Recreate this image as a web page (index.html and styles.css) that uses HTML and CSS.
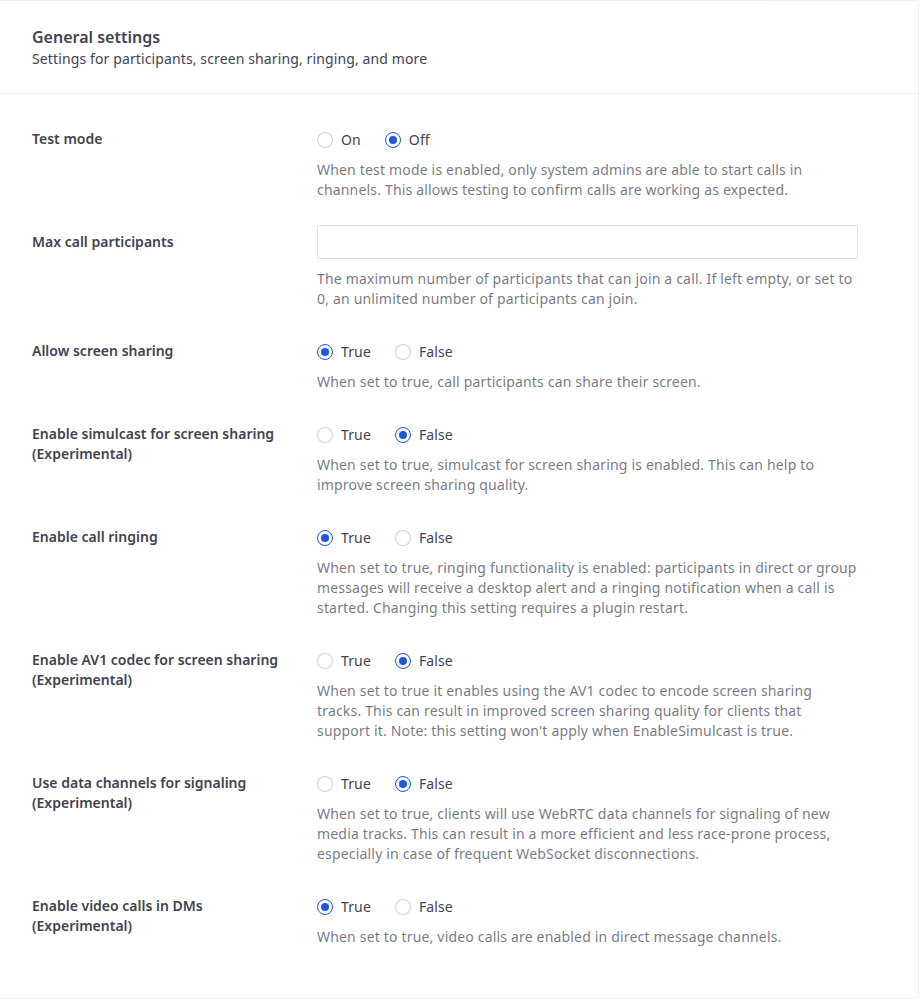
FILE: index.html
```html
<!DOCTYPE html>
<html>
<head>
<meta charset="utf-8">
<link rel="stylesheet" href="styles.css">
</head>
<body>
<div class="card">
  <div class="card-header">
    <div class="title">General settings</div>
    <div class="subtitle">Settings for participants, screen sharing, ringing, and more</div>
  </div>
  <div class="card-body">
    <div class="row">
      <div class="label">Test mode</div>
      <div class="control">
        <div class="radios">
          <span class="opt"><span class="radio"></span>On</span>
          <span class="opt"><span class="radio on"></span>Off</span>
        </div>
        <div class="help">When test mode is enabled, only system admins are able to start calls in channels. This allows testing to confirm calls are working as expected.</div>
      </div>
    </div>
    <div class="row">
      <div class="label">Max call participants</div>
      <div class="control">
        <input class="input" type="text">
        <div class="help">The maximum number of participants that can join a call. If left empty, or set to 0, an unlimited number of participants can join.</div>
      </div>
    </div>
    <div class="row">
      <div class="label">Allow screen sharing</div>
      <div class="control">
        <div class="radios">
          <span class="opt"><span class="radio on"></span>True</span>
          <span class="opt"><span class="radio"></span>False</span>
        </div>
        <div class="help">When set to true, call participants can share their screen.</div>
      </div>
    </div>
    <div class="row">
      <div class="label">Enable simulcast for screen sharing (Experimental)</div>
      <div class="control">
        <div class="radios">
          <span class="opt"><span class="radio"></span>True</span>
          <span class="opt"><span class="radio on"></span>False</span>
        </div>
        <div class="help">When set to true, simulcast for screen sharing is enabled. This can help to improve screen sharing quality.</div>
      </div>
    </div>
    <div class="row">
      <div class="label">Enable call ringing</div>
      <div class="control">
        <div class="radios">
          <span class="opt"><span class="radio on"></span>True</span>
          <span class="opt"><span class="radio"></span>False</span>
        </div>
        <div class="help">When set to true, ringing functionality is enabled: participants in direct or group messages will receive a desktop alert and a ringing notification when a call is started. Changing this setting requires a plugin restart.</div>
      </div>
    </div>
    <div class="row">
      <div class="label">Enable AV1 codec for screen sharing (Experimental)</div>
      <div class="control">
        <div class="radios">
          <span class="opt"><span class="radio"></span>True</span>
          <span class="opt"><span class="radio on"></span>False</span>
        </div>
        <div class="help">When set to true it enables using the AV1 codec to encode screen sharing tracks. This can result in improved screen sharing quality for clients that support it. Note: this setting won't apply when EnableSimulcast is true.</div>
      </div>
    </div>
    <div class="row">
      <div class="label">Use data channels for signaling (Experimental)</div>
      <div class="control">
        <div class="radios">
          <span class="opt"><span class="radio"></span>True</span>
          <span class="opt"><span class="radio on"></span>False</span>
        </div>
        <div class="help">When set to true, clients will use WebRTC data channels for signaling of new media tracks. This can result in a more efficient and less race-prone process, especially in case of frequent WebSocket disconnections.</div>
      </div>
    </div>
    <div class="row">
      <div class="label">Enable video calls in DMs (Experimental)</div>
      <div class="control">
        <div class="radios">
          <span class="opt"><span class="radio on"></span>True</span>
          <span class="opt"><span class="radio"></span>False</span>
        </div>
        <div class="help">When set to true, video calls are enabled in direct message channels.</div>
      </div>
    </div>
  </div>
</div>
</body>
</html>
```

FILE: styles.css
```css
* { box-sizing: border-box; }
html, body { margin: 0; padding: 0; background: #fff; }
body {
  font-family: "Noto Sans", "Open Sans", sans-serif;
  font-size: 14px;
  line-height: 20px;
  color: #3f4350;
}
.card {
  width: 919px;
  height: 999px;
  border: 1px solid rgba(63, 67, 80, 0.08);
  border-left: none;
  border-radius: 0 4px 4px 0;
  background: #fff;
}
.card-header {
  padding: 24px 32px 24px;
  border-bottom: 1px solid rgba(63, 67, 80, 0.08);
}
.title {
  font-size: 16px;
  line-height: 24px;
  font-weight: 600;
  color: #3f4350;
}
.subtitle {
  font-size: 14px;
  line-height: 20px;
  letter-spacing: 0.12px;
  color: #3f4350;
}
.card-body {
  padding: 28px 0 0 32px;
  display: flex;
  flex-direction: column;
  gap: 25px;
}
.row {
  display: grid;
  grid-template-columns: 255px 541px;
  column-gap: 30px;
}
.label {
  padding-top: 7px;
  font-weight: 600;
  color: #3f4350;
}
.radios {
  padding-top: 7px;
  height: 28px;
  display: flex;
  gap: 24px;
}
.opt {
  display: flex;
  align-items: center;
  gap: 8px;
  height: 21px;
  letter-spacing: 0.12px;
  color: #3f4350;
}
.radio {
  width: 16px;
  height: 16px;
  border-radius: 50%;
  border: 1px solid rgba(63, 67, 80, 0.24);
  background: #fff;
  display: flex;
  align-items: center;
  justify-content: center;
}
.radio.on {
  border-color: #1c58d9;
}
.radio.on::after {
  content: "";
  width: 8px;
  height: 8px;
  border-radius: 50%;
  background: #1c58d9;
}
.input {
  display: block;
  width: 541px;
  height: 34px;
  border: 1px solid rgba(63, 67, 80, 0.16);
  border-radius: 2px;
  background: #fff;
  font: inherit;
  padding: 6px 12px;
  margin: 0;
}
.help {
  margin-top: 10px;
  letter-spacing: 0.18px;
  color: rgba(63, 67, 80, 0.72);
}
```
